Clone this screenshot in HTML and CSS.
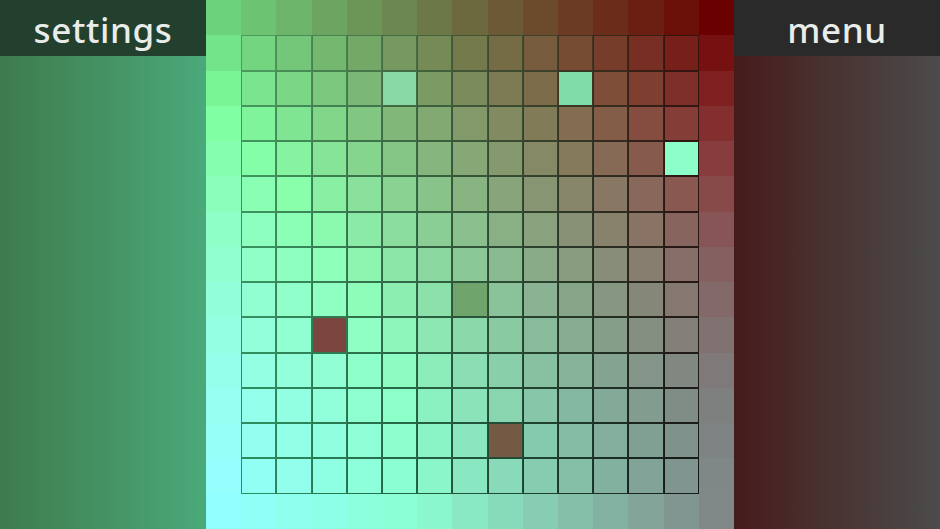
FILE: index.html
```html
<!DOCTYPE html>
<html lang="en">
<head>
<meta charset="utf-8">
<title>Hue puzzle</title>
<link rel="stylesheet" href="styles.css">
</head>
<body>
<div class="app">
  <aside class="side side-left">
    <div class="label label-settings">settings</div>
  </aside>
  <main class="board" id="board"></main>
  <aside class="side side-right">
    <div class="label label-menu">menu</div>
  </aside>
</div>
<script src="script.js"></script>
</body>
</html>
```

FILE: styles.css
```css
html, body {
  margin: 0;
  padding: 0;
  width: 940px;
  height: 529px;
  overflow: hidden;
  background: #333;
}

.app {
  display: flex;
  width: 940px;
  height: 529px;
}

.side {
  width: 206px;
  flex: none;
  display: flex;
  flex-direction: column;
}

.side-left {
  background: linear-gradient(to right, #3f7b4c, #4aa97a);
}

.side-right {
  background: linear-gradient(to right, #461b1b, #48302e 40%, #4b4b4b);
}

.label {
  height: 56px;
  display: flex;
  align-items: center;
  justify-content: center;
  font-family: "Noto Sans", "Open Sans", sans-serif;
  font-weight: 500;
  font-size: 35px;
  letter-spacing: 0.6px;
  color: #e9ede9;
  padding-top: 3px;
  box-sizing: border-box;
}

.label-settings {
  background: #233f2d;
}

.label-menu {
  background: #2a2a2a;
}

.board {
  width: 528px;
  flex: none;
  display: grid;
  grid-template-columns: repeat(15, 1fr);
  grid-template-rows: repeat(15, 1fr);
}

.cell {
  box-sizing: border-box;
}

.cell-inner {
  border: 1px solid transparent;
}
```

FILE: script.js
```js
(function () {
  var board = document.getElementById('board');
  var N = 15;
  var C = { tl: [108, 210, 123], tr: [107, 0, 0], bl: [145, 330, 255], br: [128, 136, 136] };
  var L = { tl: [82, 165, 100], tr: [55, 8, 8], bl: [45, 150, 100], br: [18, 18, 18] };
  var EXP_L = [1.6, 2.2, 1.5];
  var EXP_R = [1.0, 1.75, 1.75];
  var BUMP_L = 12, BUMP_R = 22;
  var special = {
    '2,5': '#88d8a4',
    '2,10': '#80dca8',
    '4,13': '#8cffc8',
    '8,7': '#6fa46c',
    '9,3': '#7b4540',
    '12,8': '#745a44'
  };
  function bumpShape(v) {
    return (v * Math.pow(1 - v, 2.5)) / 0.1234;
  }
  function mix(c, u, v, bump) {
    var out = [];
    for (var i = 0; i < 3; i++) {
      var e = EXP_L[i] * (1 - u) + EXP_R[i] * u;
      var vv = 1 - Math.pow(1 - v, e);
      var top = c.tl[i] * (1 - u) + c.tr[i] * u;
      var bot = c.bl[i] * (1 - u) + c.br[i] * u;
      var x = top * (1 - vv) + bot * vv;
      if (bump && i === 0) {
        x += BUMP_L * (1 - u) * 4 * v * (1 - v) + BUMP_R * u * bumpShape(v);
      }
      out.push(Math.max(0, Math.min(255, Math.round(x))));
    }
    return 'rgb(' + out.join(',') + ')';
  }
  for (var r = 0; r < N; r++) {
    for (var c = 0; c < N; c++) {
      var d = document.createElement('div');
      var u = c / (N - 1);
      var v = r / (N - 1);
      var inner = r > 0 && r < N - 1 && c > 0 && c < N - 1;
      d.className = inner ? 'cell cell-inner' : 'cell';
      d.style.backgroundColor = special[r + ',' + c] || mix(C, u, v, true);
      if (inner) d.style.borderColor = mix(L, u, v, false);
      board.appendChild(d);
    }
  }
})();
```
